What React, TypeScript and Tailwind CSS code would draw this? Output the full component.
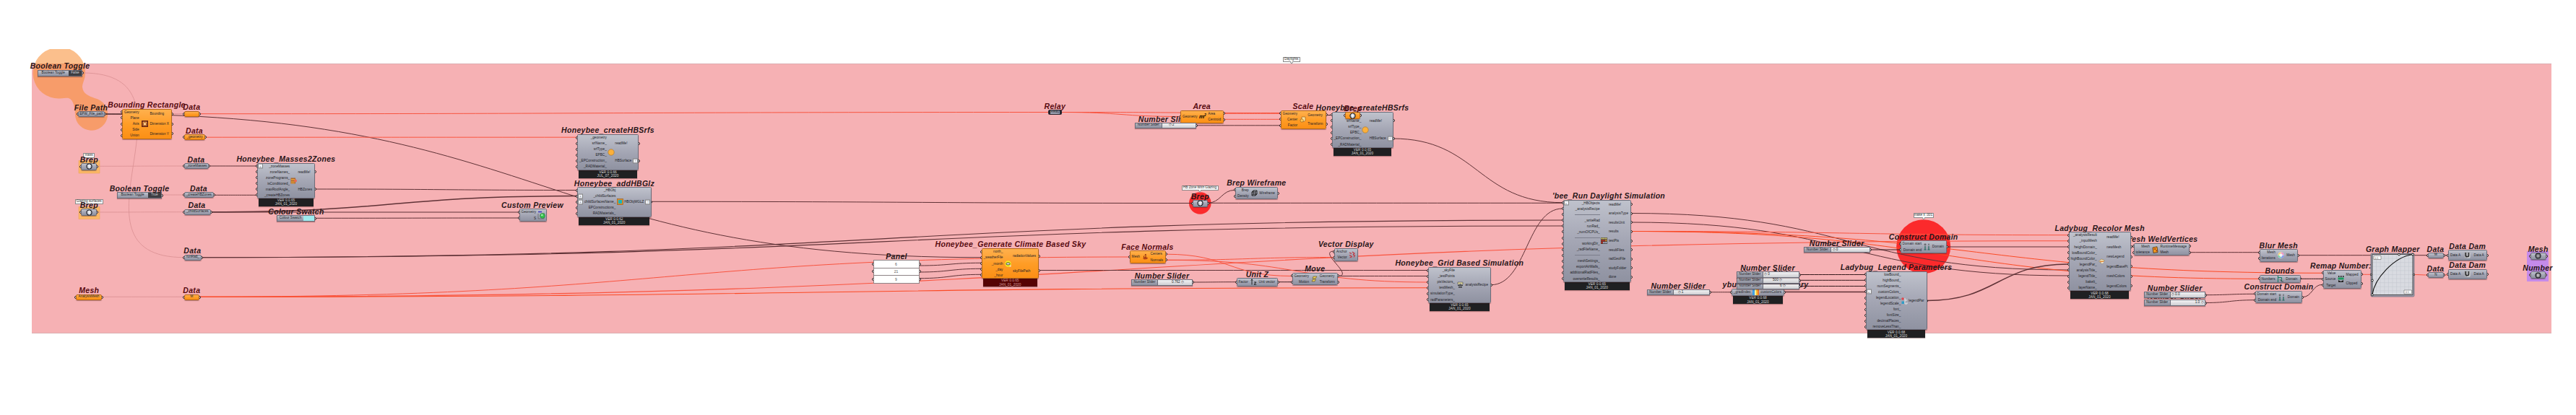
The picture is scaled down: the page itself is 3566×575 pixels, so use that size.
import type { ReactNode } from "react";
import clsx from "clsx";

type Tone = "grey" | "orange";
type TitleSpec = [text: string, cx: number, cy: number];

const INK = "#5f3236";
const BLACK = "#35191c";
const RED = "#f9543f";
const HOT = "#fb4a24";
const FAINT = "#d98f92";

function Title({ spec, tone = "grey" }: { spec: TitleSpec; tone?: Tone }) {
  const [text, cx, cy] = spec;
  return (
    <div
      className={clsx(
        "absolute -translate-x-1/2 -translate-y-1/2 whitespace-pre text-[10.5px] font-bold italic leading-[10px] tracking-[0.3px]",
        tone === "orange" ? "text-[#560a10]" : "text-[#281518]"
      )}
      style={{ left: cx, top: cy }}
    >
      {text}
    </div>
  );
}

const body = {
  grey: "border-[#6c6d7a] bg-linear-to-b from-[#bfc2cc] via-[#a4a6b4] to-[#8f92a1]",
  orange: "border-[#b5691a] bg-linear-to-b from-[#ffb04c] via-[#ff9d26] to-[#fb8f14]",
};

const label = "text-[4.7px] text-[#1d1d26]";

function Port({ side }: { side: "left" | "right" }) {
  return (
    <span
      className={clsx(
        "absolute top-1/2 -z-10 size-[4px] -translate-y-1/2 rounded-full border border-[#2d1719] bg-white",
        side === "left" ? "-left-[2px]" : "-right-[2px]"
      )}
    />
  );
}

function Glyph({ name }: { name: string }) {
  switch (name) {
    case "rect":
      return (
        <svg viewBox="0 0 9 9" className="size-[9px]">
          <rect x=".8" y=".8" width="7.400" height="7.400" fill="#f7a64a" stroke="#5c1a10" strokeWidth="1.500" />
          <path d="M2.500 6.800V4l2-2 2 2v2.800z" fill="#ffd08c" stroke="#8a3a18" strokeWidth=".7" />
        </svg>
      );
    case "zones":
      return (
        <svg viewBox="0 0 9 9" className="size-[9px]">
          <path d="M.5.5H7v8H.5z" fill="#a8642c" />
          <path d="M1 2.500h5M1 5h5M1 7.300h5" stroke="#f6b33c" />
          <circle cx="7" cy="4.500" r="2" fill="#e86a52" />
        </svg>
      );
    case "hex":
      return (
        <svg viewBox="0 0 10 10" className="size-[10px]">
          <circle cx="5" cy="5" r="4.200" fill="#fbb03b" stroke="#a97a35" strokeWidth=".7" />
        </svg>
      );
    case "glz":
      return (
        <svg viewBox="0 0 9 9" className="size-[9px]">
          <rect x=".5" y=".5" width="8" height="8" fill="#e88b20" stroke="#8b5a21" strokeWidth=".6" />
          <rect x="2" y="2" width="5" height="5" fill="#19b5bb" />
        </svg>
      );
    case "preview":
      return (
        <svg viewBox="0 0 11 12" className="h-[12px] w-[11px]">
          <path d="M1 1.500h5" stroke="#3a32c0" strokeWidth="1.500" />
          <path d="M1 4v7h8V3" fill="none" stroke="#555" strokeWidth=".6" />
          <circle cx="7" cy="7" r="3.400" fill="#35c24e" stroke="#176e2a" strokeWidth=".5" />
          <circle cx="6.300" cy="6" r="1.300" fill="#a9f0ae" />
        </svg>
      );
    case "sky":
      return (
        <svg viewBox="0 0 9 9" className="size-[9px]">
          <circle cx="4.500" cy="4.500" r="4.200" fill="#efec27" />
          <rect x="2" y="3.200" width="5" height="2.600" rx="1.200" fill="#fff" stroke="#222" strokeWidth=".9" />
          <path d="M6 8.500h2.500V6z" fill="#eee" />
        </svg>
      );
    case "scale":
      return (
        <svg viewBox="0 0 9 9" className="size-[9px]">
          <path d="M3 1h5v5L6 7.500H3z" fill="#ffe199" stroke="#8a531c" strokeWidth=".6" />
          <circle cx="3.200" cy="6" r="2.200" fill="#ffc957" stroke="#8a531c" strokeWidth=".6" />
        </svg>
      );
    case "box":
      return (
        <svg viewBox="0 0 9 9" className="size-[9px]" fill="none" stroke="#222" strokeWidth="1">
          <path d="M1 3h5v5H1zM3 1h5v5H3zM1 3l2-2M6 3l2-2M6 8l2-2M1 8l2-2" />
        </svg>
      );
    case "normals":
      return (
        <svg viewBox="0 0 9 9" className="size-[9px]">
          <path d="M1 7l3-2 4 1-1 2-4 .5z" fill="#b34418" />
          <path d="M5 6V1M5 1 3.800 2.600M2.500 6V3.500" stroke="#7b1d0b" strokeWidth=".9" fill="none" />
        </svg>
      );
    case "move":
      return (
        <svg viewBox="0 0 9 9" className="size-[9px]">
          <path d="M3 1h5L6 4H2zM2.500 5h4L5 8H1z" fill="#e9cd56" stroke="#5a4c1c" strokeWidth=".6" />
        </svg>
      );
    case "vector":
      return (
        <svg viewBox="0 0 10 10" className="size-[10px]" fill="none" stroke="#c2313b" strokeWidth="1.100">
          <path d="M1 2l3 1.500M1 5.500 4 7M1.500 9 5 7.500M5 1l3 2-2 2M6 5l2.500 1L7 8.500" />
        </svg>
      );
    case "grid":
      return (
        <svg viewBox="0 0 9 9" className="size-[9px]">
          <path d="M1 1h7v3H1z" fill="#e5dfa2" stroke="#444" strokeWidth=".6" />
          <path d="M1 5h7v1H1zM2 7h5v1.500H2z" fill="#333" />
          <circle cx="4.500" cy="4" r="1.200" fill="#666" />
        </svg>
      );
    case "heat":
      return (
        <svg viewBox="0 0 9 9" className="size-[9px]">
          <rect width="9" height="9" fill="#333" />
          <path d="M.6.6h2v2h-2zM3.400.6h2v2h-2zM6.300.6h2v2h-2z" fill="#f4e27a" />
          <path d="M.6 3.400h2v2h-2zM3.400 3.400h2v2h-2zM.6 6.300h2v2h-2z" fill="#e13222" />
          <path d="M6.300 3.400h2v2h-2z" fill="#f59f35" />
          <path d="M3.400 6.300h2v2h-2zM6.300 6.300h2v2h-2z" fill="#cdd3ef" />
        </svg>
      );
    case "gradient":
      return (
        <svg viewBox="0 0 9 8" className="h-[8px] w-[9px]">
          <path d="M0 0h3v8H0z" fill="#3f9fe8" />
          <path d="M3 0h2v8H3z" fill="#f5f1a0" />
          <path d="M5 0h2v8H5z" fill="#fbc02e" />
          <path d="M7 0h2v8H7z" fill="#f0762a" />
        </svg>
      );
    case "domain":
      return (
        <svg viewBox="0 0 9 10" className="h-[10px] w-[9px]">
          <path d="M2 4v5M7 4v5M.5 9h3M5.500 9h3" stroke="#20695c" strokeWidth="1.200" />
          <circle cx="2" cy="1.800" r="1" fill="none" stroke="#333" strokeWidth=".7" />
          <path d="M7 .6v2.400" stroke="#333" strokeWidth=".8" />
        </svg>
      );
    case "legend":
      return (
        <svg viewBox="0 0 10 10" className="size-[10px]">
          <circle cx="2" cy="2" r="1.800" fill="#e0464b" />
          <path d="M.5 5.500h3.500v3.500H.5z" fill="#2f9dc6" />
          <path d="M5 1v8h3V7M5 4h3" stroke="#eee" strokeWidth=".9" fill="none" />
        </svg>
      );
    case "recolor":
      return (
        <svg viewBox="0 0 9 8" className="h-[8px] w-[9px]">
          <path d="M.5 4 4 .8l4.500 2L5 7.500z" fill="#e9d3a3" stroke="#8a6f45" strokeWidth=".5" />
          <path d="M2 4.500h5" stroke="#df7d2c" />
          <path d="M4 6.500l3-1" stroke="#fff" />
        </svg>
      );
    case "weld":
      return (
        <svg viewBox="0 0 9 10" className="h-[10px] w-[9px]">
          <path d="M1 2 7 .8 8 8.500l-6 1z" fill="#f19a20" stroke="#44220e" strokeWidth=".7" />
          <path d="M2 4l3-1v2zM5 6l2-.5v2z" fill="#8d1d12" />
        </svg>
      );
    case "wheel":
      return (
        <svg viewBox="0 0 10 10" className="size-[9px]">
          <circle cx="5" cy="5" r="4.600" fill="#f2f2f4" />
          <path d="M5 1.500A3.500 3.500 0 0 1 8.500 5" stroke="#f08dc0" strokeWidth="1.800" fill="none" />
          <path d="M8.500 5A3.500 3.500 0 0 1 5 8.500" stroke="#7a8ff2" strokeWidth="1.800" fill="none" />
          <path d="M5 8.500A3.500 3.500 0 0 1 1.500 5" stroke="#5ed7a0" strokeWidth="1.800" fill="none" />
          <path d="M1.500 5A3.500 3.500 0 0 1 5 1.500" stroke="#f3ca60" strokeWidth="1.800" fill="none" />
        </svg>
      );
    case "bounds":
      return (
        <svg viewBox="0 0 9 9" className="size-[9px]">
          <path d="M1.500 0v9M1.500 2.500h5M6.500 2.500V8" stroke="#1c7a64" strokeWidth="1.100" fill="none" />
          <path d="M4 5l2.500 3H9" stroke="#333" strokeWidth=".7" fill="none" />
        </svg>
      );
    case "remap":
      return (
        <svg viewBox="0 0 9 10" className="h-[10px] w-[9px]">
          <path d="M1 0h1.500v2H1zM4 0h1.500v2H4zM7 0h1.500v2H7z" fill="#222" />
          <path d="M.5 2.500h8v3h-8z" fill="#1c9a5e" />
          <path d="M1 6l3.500 2L8 6v3H1z" fill="#222" />
        </svg>
      );
    case "dam":
      return (
        <svg viewBox="0 0 9 9" className="size-[9px]">
          <path d="M.5.5h8v8h-8z" fill="#a9a9ad" />
          <path d="M2.200 1v3.500a2.200 2.200 0 0 0 4.400 0V1" stroke="#222" strokeWidth="1.400" fill="none" />
          <path d="M8 1v7H4" stroke="#f3f3f3" strokeWidth=".6" fill="none" />
        </svg>
      );
    case "area":
      return (
        <span className="text-[8px] font-bold italic leading-none text-black">
          m<sup className="text-[5px]">2</sup>
        </span>
      );
    case "unitz":
      return (
        <svg viewBox="0 0 9 9" className="size-[9px]" fill="none" stroke="#222" strokeWidth="1">
          <path d="M2 8.500V1M2 .8.800 2.500M2 .8l1.200 1.700M5 5h3L5 8.200h3.200" />
        </svg>
      );
    default:
      return null;
  }
}

interface NodeSpec {
  box: [x: number, y: number, w: number, h: number];
  title: TitleSpec;
  tone?: Tone;
  inputs?: string[];
  outputs?: string[];
  icon: string;
  version?: [string, string];
  plusIn?: number[];
  plusOut?: number[];
}

function Plus({ side }: { side: "left" | "right" }) {
  return (
    <span
      className={clsx(
        "absolute top-1/2 flex size-[5px] -translate-y-1/2 items-center justify-center bg-[#eef0f4] text-[4px] leading-none text-[#333] outline-[0.5px] outline-[#888]",
        side === "left" ? "left-[2px]" : "right-[2px]"
      )}
    >
      {side === "left" ? "+" : "↑"}
    </span>
  );
}

function Component({ node }: { node: NodeSpec }) {
  const { box, title, tone = "grey", inputs = [], outputs = [], icon, version, plusIn = [], plusOut = [] } = node;
  const [x, y, w, h] = box;
  return (
    <>
      <div className="absolute isolate" style={{ left: x, top: y, width: w }}>
        <div className="relative isolate flex" style={{ height: h }}>
          <div className={clsx("absolute inset-0 -z-5 rounded-[1.5px] border shadow-[0_1px_1px_rgba(60,20,20,0.35)]", body[tone])} />
          <div className={clsx("flex w-full items-center justify-between leading-[5px]", label)}>
            <div className="flex h-full flex-col py-[0.5px] text-right">
              {inputs.map((text, i) => (
                <div key={i} className={clsx("relative flex flex-1 items-center justify-end", plusIn.length ? "pl-[10px]" : "pl-[3px]")}>
                  <Port side="left" />
                  {plusIn.includes(i) && <Plus side="left" />}
                  {text === "-" ? <span className="h-px w-[35px] bg-[#7c7e8b]" /> : text}
                </div>
              ))}
            </div>
            <Glyph name={icon} />
            <div className="flex h-full flex-col py-[0.5px]">
              {outputs.map((text, i) => (
                <div key={i} className={clsx("relative flex flex-1 items-center", plusOut.length ? "pr-[10px]" : "pr-[4px]")}>
                  <Port side="right" />
                  {plusOut.includes(i) && <Plus side="right" />}
                  {text}
                </div>
              ))}
            </div>
          </div>
        </div>
        {version && (
          <div
            className={clsx(
              "mx-[2.3px] flex h-[11px] flex-col items-center justify-center text-[4.8px] leading-[5.2px] shadow-[0_1px_1px_rgba(60,20,20,0.35)]",
              tone === "orange" ? "bg-[#560303] text-[#d9a0a0]" : "bg-[#1f2022] text-[#dededf]"
            )}
          >
            <span>{version[0]}</span>
            <span>{version[1]}</span>
          </div>
        )}
      </div>
      <Title spec={title} tone={tone} />
    </>
  );
}

interface ParamSpec {
  box: [x: number, cy: number, w: number];
  title: TitleSpec;
  tone?: Tone;
  text?: string;
  ball?: "brep" | "mesh" | "number";
}

function Param({ param }: { param: ParamSpec }) {
  const { box, title, tone = "grey", text, ball } = param;
  const [x, cy, w] = box;
  return (
    <>
      <div className={clsx("absolute isolate -translate-y-1/2", ball ? "h-[10px]" : "h-[8px]")} style={{ left: x, top: cy, width: w }}>
        <Port side="left" />
        <Port side="right" />
        <div
          className={clsx(
            "flex size-full items-center justify-center whitespace-nowrap rounded-[2px] border leading-none shadow-[0_1px_1px_rgba(60,20,20,0.35)]",
            label,
            body[tone]
          )}
        >
          {ball ? (
            <svg viewBox="0 0 10 10" className="size-[9px] shrink-0">
              <circle cx="5" cy="5" r="3.900" fill={ball === "brep" ? "#c3c8d3" : "#77777b"} stroke="#1c1c22" strokeWidth="1.300" />
              {ball === "brep" && <path d="M5 1.800v6.400M5 5 2.300 3.500M5 5l2.700-1.500" stroke="#fff" strokeWidth="1" />}
              {ball === "mesh" && <circle cx="5" cy="5" r="1.800" fill="#a5a5a9" />}
              {ball === "number" && <path d="M4 3v4M6 3v4" stroke="#f1f1f1" strokeWidth="1" />}
            </svg>
          ) : (
            text
          )}
        </div>
      </div>
      <Title spec={title} tone={tone} />
    </>
  );
}

interface SliderSpec {
  box: [x: number, y: number, w: number];
  split: number;
  title: TitleSpec;
  value: string;
  pad: number;
}

function Slider({ slider }: { slider: SliderSpec }) {
  const [x, y, w] = slider.box;
  return (
    <div className="absolute isolate h-[8.5px]" style={{ left: x, top: y, width: w }}>
      <Port side="right" />
      <div
        className={clsx(
          "flex size-full overflow-hidden border border-[#6c6d7a] bg-linear-to-b from-[#f2f2f3] to-[#cfcfd3] leading-none shadow-[0_1px_1px_rgba(60,20,20,0.35)]",
          label
        )}
      >
        <div
          className="flex shrink-0 items-center justify-center border-r border-[#6c6d7a] bg-linear-to-b from-[#b4b6c1] to-[#8d909e]"
          style={{ width: slider.split }}
        >
          Number Slider
        </div>
        <div className="flex items-center whitespace-pre" style={{ paddingLeft: slider.pad }}>
          {slider.value}
        </div>
      </div>
    </div>
  );
}

interface SwatchProps {
  x: number;
  y: number;
  w: number;
  split: number;
  text: string;
  children: ReactNode;
}

function Swatch({ x, y, w, split, text, children }: SwatchProps) {
  return (
    <div className="absolute isolate h-[9px]" style={{ left: x, top: y, width: w }}>
      <Port side="right" />
      <div
        className={clsx(
          "flex size-full border border-[#6c6d7a] bg-linear-to-b from-[#bfc2cc] to-[#8f92a1] leading-none shadow-[0_1px_1px_rgba(60,20,20,0.35)]",
          label
        )}
      >
        <div className="flex items-center justify-center whitespace-nowrap" style={{ width: split }}>
          {text}
        </div>
        {children}
      </div>
    </div>
  );
}

function Toggle({ x, y, value, title }: { x: number; y: number; value: string; title: TitleSpec }) {
  return (
    <>
      <Swatch x={x} y={y} w={62.6} split={42} text="Boolean Toggle">
        <div className="flex flex-1 items-center justify-center bg-[#3d3d42] text-[#d0d0d4]">{value}</div>
      </Swatch>
      <Title spec={title} />
    </>
  );
}

function Tag({ x, y, w, text, tail }: { x: number; y: number; w: number; text: string; tail?: boolean }) {
  return (
    <div className="absolute h-[7px]" style={{ left: x, top: y, width: w }}>
      <div className="flex size-full items-center justify-center whitespace-nowrap border border-[#8b8b8b] bg-[#fafafa] text-[4.7px] leading-none text-[#333]">
        {text}
      </div>
      {tail && <span className="absolute -bottom-[1.5px] left-1/2 size-[3px] -translate-x-1/2 rotate-45 border-b border-r border-[#8b8b8b] bg-white" />}
    </div>
  );
}

// x1, y1, x2, y2, colour, width, handle length (half the span when left out)
type Wire = [number, number, number, number, string, number, number?];

const wires: Wire[] = [
  [114, 101, 255, 356.7, FAINT, 0.8, 180],
  [145, 158, 1357, 356.7, INK, 1],
  [145, 158, 169, 158, BLACK, 1],
  [238, 157.7, 255, 157.7, FAINT, 1],
  [134, 230.3, 255, 230, FAINT, 0.8],
  [224, 270, 255, 270, FAINT, 0.8],
  [134, 294, 255, 293.7, FAINT, 0.8],
  [141, 411.3, 255, 411.3, FAINT, 0.8],
  [276, 157.7, 1451, 155.5, RED, 1],
  [284, 190.2, 799, 190.2, RED, 1],
  [289, 230, 356, 230, INK, 1],
  [295, 270.3, 356, 270.3, INK, 1],
  [436, 262, 799, 263.5, INK, 1],
  [291, 293.7, 799, 271.5, INK, 1.5],
  [291, 294, 718, 294, INK, 1.2],
  [436, 302.3, 718, 302, INK, 1],
  [279, 356.7, 2163, 305, INK, 1.1],
  [279, 356.7, 2163, 313, INK, 1.1],
  [276, 411.3, 1563, 356, RED, 1],
  [276, 411.3, 2863, 333.7, RED, 1.1],
  [276, 411.3, 1977, 398.7, HOT, 1.1],
  [902, 279.3, 1651, 281.5, INK, 1],
  [1272, 368, 1358, 364.3, INK, 1],
  [1272, 377, 1358, 372.3, INK, 1],
  [1272, 385.7, 1358, 380.3, INK, 1],
  [1438, 374.5, 1977, 374.5, INK, 1],
  [1470, 155.5, 1634, 161.5, RED, 1],
  [1470, 155.5, 1772, 156.5, RED, 1],
  [1694, 157.3, 1772, 157.3, RED, 1],
  [1694, 165.3, 1772, 165.3, RED, 1],
  [1656, 173.8, 1772, 173.8, INK, 1],
  [1836, 159.5, 1844, 159.5, BLACK, 1],
  [1928, 192, 2163, 280.7, INK, 1],
  [1671, 281.3, 2163, 281.3, INK, 1],
  [1671, 281.3, 1710, 263.3, INK, 1],
  [1614, 352.2, 1788, 382.5, RED, 1],
  [1614, 360.3, 1977, 391, RED, 1],
  [1614, 360.3, 1847, 356.5, RED, 1],
  [1852, 382.5, 1847, 348, INK, 1, 24],
  [1852, 382.5, 1977, 382.5, INK, 1],
  [1651, 391, 1711, 390.7, INK, 1],
  [1769, 390.7, 1788, 390.7, BLACK, 1],
  [2064, 394.7, 2163, 289, INK, 1],
  [2258, 295.5, 2863, 374, INK, 1],
  [2258, 308, 2863, 382, INK, 1],
  [2258, 320.5, 2863, 325.7, RED, 1],
  [2258, 320.5, 3215, 378.3, HOT, 1],
  [2258, 320.5, 3127, 386.3, HOT, 1],
  [2366, 404.8, 2397, 404.8, INK, 1],
  [2490, 380.5, 2582, 380.5, BLACK, 1],
  [2490, 388.3, 2582, 388.3, BLACK, 1],
  [2490, 396.5, 2582, 396.5, BLACK, 1],
  [2470, 404.5, 2582, 404.5, INK, 1.5],
  [2588, 346, 2630, 346, BLACK, 1],
  [2695, 342, 2863, 342, INK, 1.2],
  [2667, 416.5, 2863, 366, INK, 1.5],
  [2949, 341.5, 2954, 341.5, BLACK, 1],
  [3031, 349.7, 3127, 349.7, INK, 1],
  [3180, 353.7, 3361, 353.7, INK, 1],
  [3184, 386.3, 3215, 386.3, BLACK, 1],
  [3187, 411.7, 3215, 394.3, INK, 1],
  [3052, 408.7, 3121, 407.3, INK, 1],
  [3052, 419.5, 3121, 415.7, INK, 1],
  [3268, 380.3, 3282, 380.3, RED, 1],
  [3341, 380.5, 3361, 381, RED, 1],
  [3382, 353.7, 3389, 353.7, BLACK, 1],
  [3382, 381, 3389, 381, RED, 1],
];

const srfInputs = ["_geometry", "srfName_", "srfType_", "EPBC_", "_EPConstruction_", "_RADMaterial_"];

const nodes: NodeSpec[] = [
  {
    box: [169, 150.5, 69, 42],
    title: ["Bounding Rectangle", 203, 145],
    tone: "orange",
    inputs: ["Geometry", "Plane", "Axis", "Side", "Union"],
    outputs: ["Bounding", "Dimension X", "Dimension Y"],
    icon: "rect",
  },
  {
    box: [356, 225.7, 80, 49.3],
    title: ["Honeybee_Masses2Zones", 396, 220],
    inputs: ["_zoneMasses", "zoneNames_", "zonePrograms_", "isConditioned_", "maxRoofAngle_", "_createHBZones"],
    outputs: ["readMe!", "HBZones"],
    icon: "zones",
    version: ["VER 0.0.65", "JAN_01_2020"],
    plusIn: [0],
  },
  {
    box: [799, 186, 85, 49.5],
    title: ["Honeybee_createHBSrfs", 841.5, 180],
    inputs: srfInputs,
    outputs: ["readMe!", "HBSurface"],
    icon: "hex",
    version: ["VER 0.0.66", "JUL_07_2020"],
    plusOut: [1],
  },
  {
    box: [799, 259, 102.5, 41.5],
    title: ["Honeybee_addHBGlz", 850.5, 253.5],
    inputs: ["_HBObj", "_childSurfaces", "childSurfacesName_", "EPConstructions_", "RADMaterials_"],
    outputs: ["HBObjWGLZ"],
    icon: "glz",
    version: ["VER 0.0.62", "JAN_01_2020"],
    plusIn: [1, 2],
    plusOut: [0],
  },
  {
    box: [718.5, 289.3, 38, 17.3],
    title: ["Custom Preview", 737, 283.5],
    inputs: ["Geometry", "S"],
    icon: "preview",
  },
  {
    box: [1358.5, 344, 79.5, 42],
    title: ["Honeybee_Generate Climate Based Sky", 1399, 338.3],
    tone: "orange",
    inputs: ["north_", "_weatherFile", "_month", "_day", "_hour"],
    outputs: ["radiationValues", "skyFilePath"],
    icon: "sky",
    version: ["VER 0.0.65", "JAN_01_2020"],
  },
  {
    box: [1634, 152.5, 60, 18],
    title: ["Area", 1663.7, 147],
    tone: "orange",
    inputs: ["Geometry"],
    outputs: ["Area", "Centroid"],
    icon: "area",
  },
  {
    box: [1772.5, 152.5, 63, 26],
    title: ["Scale", 1804, 147],
    tone: "orange",
    inputs: ["Geometry", "Center", "Factor"],
    outputs: ["Geometry", "Transform"],
    icon: "scale",
  },
  {
    box: [1843.5, 154.7, 85, 50],
    title: ["Honeybee_createHBSrfs", 1886, 149.3],
    inputs: srfInputs,
    outputs: ["readMe!", "HBSurface"],
    icon: "hex",
    version: ["VER 0.0.65", "JAN_01_2020"],
    plusOut: [1],
  },
  {
    box: [1710, 258.7, 59, 17.8],
    title: ["Brep Wireframe", 1739.3, 253],
    inputs: ["Brep", "Density"],
    outputs: ["Wireframe"],
    icon: "box",
  },
  {
    box: [1563.5, 347, 50.5, 17.8],
    title: ["Face Normals", 1588.5, 341.7],
    tone: "orange",
    inputs: ["Mesh"],
    outputs: ["Centers", "Normals"],
    icon: "normals",
  },
  {
    box: [1711.5, 384.5, 57.5, 12],
    title: ["Unit Z", 1740.5, 379.7],
    inputs: ["Factor"],
    outputs: ["Unit vector"],
    icon: "unitz",
  },
  {
    box: [1788.5, 377.7, 63.5, 17.8],
    title: ["Move", 1820.3, 372.3],
    inputs: ["Geometry", "Motion"],
    outputs: ["Geometry", "Transform"],
    icon: "move",
  },
  {
    box: [1847, 344, 33, 17.5],
    title: ["Vector Display", 1863.3, 338],
    inputs: ["Anchor", "Vector"],
    icon: "vector",
  },
  {
    box: [1977, 370, 87, 49.7],
    title: ["Honeybee_Grid Based Simulation", 2020.3, 364.3],
    inputs: ["_skyFile", "_testPoints", "ptsVectors_", "testMesh_", "simulationType_", "radParameters_"],
    outputs: ["analysisRecipe"],
    icon: "grid",
    version: ["VER 0.0.65", "JAN_01_2020"],
  },
  {
    box: [2163.5, 276.5, 94.5, 114],
    title: ["'bee_Run Daylight Simulation", 2227, 271],
    inputs: [
      "_HBObjects",
      "_analysisRecipe",
      "-",
      "_writeRad",
      "runRad_",
      "_numOfCPUs_",
      "-",
      "workingDir_",
      "_radFileName_",
      "-",
      "meshSettings_",
      "exportAirWalls_",
      "additionalRadFiles_",
      "overwriteResults_",
    ],
    outputs: ["readMe!", "analysisType", "resultsUnit", "results", "testPts", "resultFiles", "radGeoFile", "studyFolder", "done"],
    icon: "heat",
    version: ["VER 0.0.65", "JAN_01_2020"],
    plusIn: [0],
  },
  {
    box: [2397, 399.5, 73, 10.7],
    title: ["ybug_Gradient Library", 2444, 394],
    inputs: ["_gradIndex"],
    outputs: ["customColors"],
    icon: "gradient",
    version: ["VER 0.0.68", "JAN_01_2020"],
  },
  {
    box: [2630.5, 333.3, 64.5, 17.3],
    title: ["Construct Domain", 2662.7, 327.7],
    inputs: ["Domain start", "Domain end"],
    outputs: ["Domain"],
    icon: "domain",
  },
  {
    box: [2582.5, 375.7, 85, 81.8],
    title: ["Ladybug_Legend Parameters", 2625, 370.3],
    inputs: [
      "lowBound_",
      "highBound_",
      "numSegments_",
      "customColors_",
      "legendLocation_",
      "legendScale_",
      "font_",
      "fontSize_",
      "decimalPlaces_",
      "removeLessThan_",
    ],
    outputs: ["legendPar"],
    icon: "legend",
    version: ["VER 0.0.68", "JAN_01_2020"],
    plusIn: [3],
  },
  {
    box: [2953.5, 336.7, 77.5, 17.8],
    title: ["'esh WeldVertices", 2995.5, 331.3],
    inputs: ["Mesh", "tolerance"],
    outputs: ["RuntimeMessage", "Mesh"],
    icon: "weld",
  },
  {
    box: [2863.5, 321.3, 86, 82],
    title: ["Ladybug_Recolor Mesh", 2906.7, 315.7],
    inputs: [
      "_analysisResult",
      "_inputMesh",
      "heightDomain_",
      "lowBoundColor_",
      "highBoundColor_",
      "legendPar_",
      "analysisTitle_",
      "legendTitle_",
      "bakeIt_",
      "layerName_",
    ],
    outputs: ["readMe!", "newMesh", "newLegend", "legendBasePt", "meshColors", "legendColors"],
    icon: "recolor",
    version: ["VER 0.0.68", "JAN_01_2020"],
  },
  {
    box: [3127.5, 345, 53.3, 17.5],
    title: ["Blur Mesh", 3154.3, 339.5],
    inputs: ["Mesh", "Iterations"],
    outputs: ["Mesh"],
    icon: "wheel",
  },
  {
    box: [3127.5, 380.7, 57, 11.5],
    title: ["Bounds", 3156, 375.3],
    inputs: ["Numbers"],
    outputs: ["Domain"],
    icon: "bounds",
  },
  {
    box: [3121.5, 402.7, 65.5, 17.8],
    title: ["Construct Domain", 3154.5, 397.3],
    inputs: ["Domain start", "Domain end"],
    outputs: ["Domain"],
    icon: "domain",
  },
  {
    box: [3215.5, 373.7, 53, 26],
    title: ["Remap Number:", 3240.5, 368],
    inputs: ["Value", "Source", "Target"],
    outputs: ["Mapped", "Clipped"],
    icon: "remap",
  },
  {
    box: [3389, 346.3, 53.7, 14.7],
    title: ["Data Dam", 3415.7, 341],
    inputs: ["Data A"],
    outputs: ["Data A"],
    icon: "dam",
  },
  {
    box: [3389, 372.5, 53.7, 14.7],
    title: ["Data Dam", 3415.7, 367.3],
    inputs: ["Data A"],
    outputs: ["Data A"],
    icon: "dam",
  },
];

const params: ParamSpec[] = [
  { box: [108, 158.3, 37], title: ["File Path", 126, 148.7], text: "EPW_File_path" },
  { box: [255, 157.5, 21], title: ["Data", 265.3, 148.3], tone: "orange" },
  { box: [255, 190.2, 29], title: ["Data", 269, 180.7], tone: "orange", text: "_geometry" },
  { box: [255, 230.2, 34], title: ["Data", 271.5, 220.7], text: "_zoneMasses" },
  { box: [255, 270.3, 40.5], title: ["Data", 275, 261], text: "_createHBZones" },
  { box: [255, 293.8, 36.5], title: ["Data", 272.5, 284.3], text: "_childSurfaces" },
  { box: [255, 356.8, 24], title: ["Data", 266.3, 347.3], text: "runRad_" },
  { box: [255, 411.5, 21], title: ["Data", 265.3, 402], tone: "orange", text: "M" },
  { box: [105, 411.5, 36], title: ["Mesh", 123.3, 402], tone: "orange", text: "AnalysisMesh" },
  { box: [112, 230.5, 22], title: ["Brep", 123.3, 220.5], ball: "brep" },
  { box: [112, 294.3, 22], title: ["Brep", 123.3, 284.3], ball: "brep" },
  { box: [1862, 160, 21], title: ["Brep", 1873, 149.7], tone: "orange", ball: "brep" },
  { box: [1651, 281.7, 21], title: ["Brep", 1661.3, 271.7], ball: "brep" },
  { box: [3361, 353.8, 21.7], title: ["Data", 3371.5, 344.7], text: "M" },
  { box: [3361, 381.2, 21.7], title: ["Data", 3371.5, 371.7], text: "N" },
  { box: [3503, 354.7, 21.5], title: ["Mesh", 3513.7, 344.7], ball: "mesh" },
  { box: [3502.5, 381.3, 21.5], title: ["Number", 3513, 371], ball: "number" },
];

const sliders: SliderSpec[] = [
  { box: [1571, 169.5, 85], split: 36.5, title: ["Number Slider", 1613.6, 164.5], value: "◇ 2", pad: 9 },
  { box: [1566, 387, 84.7], split: 36, title: ["Number Slider", 1608.5, 381.7], value: "0.762 ◇", pad: 19 },
  { box: [2279.5, 400.7, 87], split: 36.5, title: ["Number Slider", 2323.3, 395.5], value: "◇ 1", pad: 5.5 },
  { box: [2403.5, 392.5, 87], split: 36.5, title: ["Number Slider", 2447, 387], value: "6 ◇", pad: 23 },
  { box: [2403.5, 384.3, 87], split: 36.5, title: ["Number Slider", 2447, 379], value: "500 ◇", pad: 13 },
  { box: [2403.5, 376.3, 87], split: 36.5, title: ["Number Slider", 2447, 371.3], value: "◇ 0", pad: 1 },
  { box: [2497, 341.7, 91.5], split: 36.5, title: ["Number Slider", 2542.7, 336.7], value: "◇ 0", pad: 2 },
  { box: [2967.7, 415.3, 85], split: 36, title: ["Number Slider", 3010.7, 410], value: "1.0 ◇", pad: 34 },
  { box: [2967.7, 404.3, 85], split: 36, title: ["Number Slider", 3010.7, 399.3], value: "◇ 0.0", pad: 1 },
];

function wirePath([x1, y1, x2, y2, , , handle]: Wire) {
  const k = handle ?? (x2 - x1) / 2;
  return `M${x1} ${y1}C${x1 + k} ${y1} ${x2 - k} ${y2} ${x2} ${y2}`;
}

function Panel() {
  return (
    <>
      <div className="absolute left-[1208.5px] top-[360.3px] isolate flex h-[32.7px] w-[64px] flex-col">
        {["6", "21", "9"].map((value) => (
          <div key={value} className="relative flex-1">
            <Port side="left" />
            <Port side="right" />
            <div className="flex size-full items-center justify-center border border-b-0 border-[#8d8385] bg-white text-[5px] leading-none text-[#555]">
              {value}
            </div>
          </div>
        ))}
        <div className="h-px bg-[#8d8385]" />
      </div>
      <Title spec={["Panel", 1241, 355.3]} />
    </>
  );
}

function GraphMapper() {
  return (
    <>
      <svg viewBox="0 0 62 62" className="absolute left-[3280.5px] top-[350px] size-[62px]">
        <rect x="1" y="1" width="60" height="60" rx="1.500" fill="#9c9cab" stroke="#75727d" strokeWidth=".8" />
        <rect x="3" y="2.500" width="56" height="56" fill="#d9dbe1" />
        <path
          d="M8.600 2.500v56M14.200 2.500v56M19.800 2.500v56M25.400 2.500v56M31 2.500v56M36.600 2.500v56M42.200 2.500v56M47.800 2.500v56M53.400 2.500v56M3 8.100h56M3 13.700h56M3 19.300h56M3 24.900h56M3 30.500h56M3 36.100h56M3 41.700h56M3 47.300h56M3 52.900h56"
          stroke="#c3c6cf"
          strokeWidth=".5"
        />
        <path d="M3 2.500h56v56H3z" fill="none" stroke="#444" strokeWidth=".9" />
        <path d="M3 58.500C6 36 33 6 59 2.500" fill="none" stroke="#111" strokeWidth="1.100" />
        <path d="M5 4.500h10v5H5zM47 52h10.500v5H47z" fill="#fff" stroke="#666" strokeWidth=".6" />
        <text x="6.500" y="8.500" fontSize="3.600" fill="#555">0:1</text>
        <text x="49" y="56" fontSize="3.600" fill="#555">0:1</text>
        <g fill="#fff" stroke="#111" strokeWidth=".9">
          <circle cx="3" cy="58.500" r="1.400" />
          <circle cx="59" cy="2.500" r="1.400" />
          <circle cx="40" cy="2.500" r="1.400" />
          <circle cx="3" cy="38.500" r="1.400" />
          <circle cx="1.200" cy="30.500" r="1" />
          <circle cx="60.800" cy="30.500" r="1" />
        </g>
      </svg>
      <Title spec={["Graph Mapper", 3312.3, 345]} />
    </>
  );
}

export default function App() {
  return (
    <main className="relative h-[575px] w-[3566px] overflow-hidden bg-white font-['Liberation_Sans',Arial,sans-serif]">
      <svg viewBox="0 0 3566 575" className="absolute inset-0 h-[575px] w-[3566px]">
        <rect x="44" y="88" width="3488" height="374" fill="#f6b1b4" />
        <path d="M44 88.500H3532M44 461.500H3532" stroke="#dcaeb1" />
        {/* metaball group round the toggle and the file path */}
        <path
          d="M69 68H96.500A35.300 35.300 0 0 1 117.500 107C116 113 114 116 114 121C115 130 123 133 131 136A22.600 22.600 0 1 1 104 159C104 151 102 138 95 136C92 135.500 89 136.500 82.500 136.500A35.300 35.300 0 0 1 69 68Z"
          fill="#f78a2d"
          fillOpacity=".55"
        />
        <path d="M109 222.500h29v17.500h-29zM109 286.500h29v17h-29z" fill="#fbb866" stroke="#eda45d" strokeWidth=".6" />
        <rect x="3498" y="348" width="30" height="42" fill="#c58bea" />
        <circle cx="1661.300" cy="281.500" r="15.300" fill="#fb2a2c" />
        <circle cx="2662.700" cy="341.700" r="37.500" fill="#fb2a2c" />
        {wires.map((wire, i) => (
          <path key={i} d={wirePath(wire)} fill="none" stroke={wire[4]} strokeWidth={wire[5]} />
        ))}
      </svg>

      {/* sits under the Area component */}
      <Title spec={sliders[0].title} />
      {nodes.map((node) => (
        <Component key={`${node.box[0]}-${node.box[1]}`} node={node} />
      ))}

      <Tag x={115} y={212.3} w={16} text="mass" />
      <Tag x={104} y={276} w={38.5} text="Glazing surfaces" />
      <Tag x={1776} y={79.3} w={23.5} text="Daylights" tail />
      <Tag x={1635.5} y={257} w={51} text="HB Zone With Glazing" tail />
      <Tag x={2648.5} y={295.3} w={28} text="make it .001" tail />

      {params.map((param) => (
        <Param key={`${param.box[0]}-${param.box[1]}`} param={param} />
      ))}

      <Toggle x={51.7} y={96.7} value="False" title={["Boolean Toggle", 83, 91.3]} />
      <Toggle x={161.5} y={266} value="True" title={["Boolean Toggle", 193, 260.5]} />
      <Swatch x={383} y={298} w={53} split={36} text="Colour Swatch">
        <div className="flex-1 bg-[#9febee]" />
      </Swatch>
      <Title spec={["Colour Swatch", 410, 292.7]} />

      {sliders.map((slider, i) => (
        <div key={i} className="contents">
          {i > 0 && <Title spec={slider.title} />}
          <Slider slider={slider} />
        </div>
      ))}

      <Panel />
      <GraphMapper />

      <div className="absolute left-[1451px] top-[152px] flex h-[7px] w-[19px] items-center justify-center rounded-[2.5px] border-x-3 border-y border-[#25252e] bg-[#9a9fb0] text-[4.7px] leading-none text-[#1d1d24]">
        Relay
      </div>
      <Title spec={["Relay", 1460.3, 147]} tone="orange" />
    </main>
  );
}
